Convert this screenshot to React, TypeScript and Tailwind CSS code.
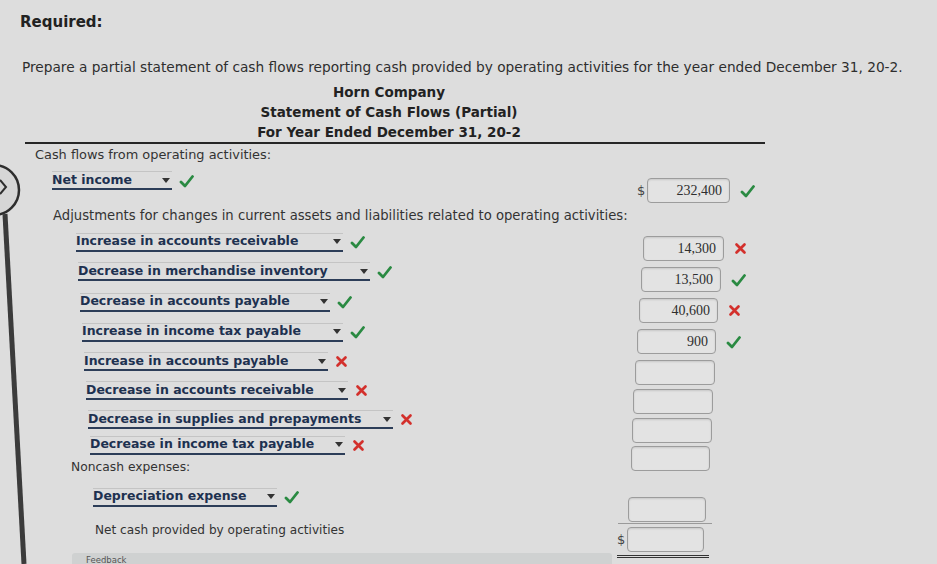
import React from "react";

type Mark = "ok" | "bad";

type Row =
  | { kind: "text"; text: string; cls: string; size: string }
  | { kind: "select"; text: string; cls: string; w: string; mark: Mark };

// left-hand rows; the indents drift right because the screen was photographed at an angle
const rows: Row[] = [
  { kind: "text", text: "Cash flows from operating activities:", cls: "h-[22px] pl-[35px]", size: "text-[12.9px]" },
  { kind: "select", text: "Net income", cls: "h-[29px] pl-[52px]", w: "w-[120px]", mark: "ok" },
  { kind: "text", text: "Adjustments for changes in current assets and liabilities related to operating activities:", cls: "h-[33px] pl-[53px] pt-[8px]", size: "text-[13.2px]" },
  { kind: "select", text: "Increase in accounts receivable", cls: "h-[28px] pl-[76px]", w: "w-[267px]", mark: "ok" },
  { kind: "select", text: "Decrease in merchandise inventory", cls: "h-[31px] pl-[78px]", w: "w-[292px]", mark: "ok" },
  { kind: "select", text: "Decrease in accounts payable", cls: "h-[30px] pl-[80px]", w: "w-[250px]", mark: "ok" },
  { kind: "select", text: "Increase in income tax payable", cls: "h-[30px] pl-[82px]", w: "w-[261px]", mark: "ok" },
  { kind: "select", text: "Increase in accounts payable", cls: "h-[29px] pl-[84px]", w: "w-[244px]", mark: "bad" },
  { kind: "select", text: "Decrease in accounts receivable", cls: "h-[29px] pl-[86px]", w: "w-[262px]", mark: "bad" },
  { kind: "select", text: "Decrease in supplies and prepayments", cls: "h-[29px] pl-[88px]", w: "w-[305px]", mark: "bad" },
  { kind: "select", text: "Decrease in income tax payable", cls: "h-[22px] pl-[90px]", w: "w-[255px]", mark: "bad" },
  { kind: "text", text: "Noncash expenses:", cls: "h-[23px] pl-[71px]", size: "text-[12.3px]" },
  { kind: "select", text: "Depreciation expense", cls: "h-[36px] pl-[93px]", w: "w-[184px]", mark: "ok" },
  { kind: "text", text: "Net cash provided by operating activities", cls: "h-[30px] pl-[95px]", size: "text-[12.1px]" },
];

type Box = { value?: string; dollar?: boolean; mark?: Mark; cls: string; w: string };

const boxes: Box[] = [
  { value: "232,400", dollar: true, mark: "ok", cls: "mt-[34px] pl-[37px]", w: "w-[83px]" },
  { value: "14,300", mark: "bad", cls: "mt-[33px] pl-[33px]", w: "w-[81px]" },
  { value: "13,500", mark: "ok", cls: "mt-[6px] pl-[31px]", w: "w-[80px]" },
  { value: "40,600", mark: "bad", cls: "mt-[6px] pl-[29px]", w: "w-[79px]" },
  { value: "900", mark: "ok", cls: "mt-[6px] pl-[27px]", w: "w-[79px]" },
  { cls: "mt-[6px] pl-[25px]", w: "w-[80px]" },
  { cls: "mt-[4px] pl-[23px]", w: "w-[80px]" },
  { cls: "mt-[4px] pl-[22px]", w: "w-[80px]" },
  { cls: "mt-[3px] pl-[21px]", w: "w-[79px]" },
  { cls: "mt-[26px] pl-[18px]", w: "w-[78px]" },
];

function Check() {
  return (
    <svg width="15" height="14" viewBox="0 0 15 14" className="shrink-0">
      <path d="M2 8 L6 12 L13.5 2.5" fill="none" stroke="#2a8a42" strokeWidth="2.8" strokeLinecap="round" strokeLinejoin="round" />
    </svg>
  );
}

function Cross() {
  return (
    <svg width="13" height="13" viewBox="0 0 13 13" className="shrink-0">
      <path d="M2.5 2.5 L10.5 10.5 M10.5 2.5 L2.5 10.5" stroke="#d3302c" strokeWidth="2.7" strokeLinecap="round" />
    </svg>
  );
}

function MarkIcon({ mark }: { mark: Mark }) {
  return mark === "ok" ? <Check /> : <Cross />;
}

function Select({ text, w }: { text: string; w: string }) {
  return (
    <div className={`${w} h-[19px] flex items-center justify-between border-t border-[#c4c4c4] border-b-2 border-b-[#2c3d58]`}>
      <span className="text-[12.5px] font-bold text-[#1d3150] leading-none whitespace-nowrap">{text}</span>
      <svg width="8" height="5" viewBox="0 0 8 5" className="mr-[2px] shrink-0">
        <path d="M0 0 H8 L4 5 Z" fill="#333" />
      </svg>
    </div>
  );
}

function AmountBox({ value, w }: { value?: string; w: string }) {
  return (
    <div
      className={`${w} h-[25px] rounded-[4px] border border-[#9c9c9c] bg-[#e3e3e3] shadow-[inset_0_1px_2px_rgba(0,0,0,0.12)] flex items-center justify-end pr-[7px] text-[14px] text-[#2e2e2e]`}
      style={{ fontFamily: '"Liberation Serif", serif' }}
    >
      {value}
    </div>
  );
}

export default function App() {
  return (
    <div
      className="relative w-[937px] h-[564px] overflow-hidden bg-[#dddddd] text-[#2b2b2b]"
      style={{ fontFamily: '"DejaVu Sans", Verdana, sans-serif' }}
    >
      {/* edge of the monitor / slide button on the left */}
      <svg className="absolute left-0 top-0" width="40" height="564" viewBox="0 0 40 564">
        <circle cx="-6" cy="190" r="25" fill="#d6d6d6" stroke="#2e2e2e" strokeWidth="2.5" />
        <path d="M0 180 L6 187 L0 194" fill="none" stroke="#2e2e2e" strokeWidth="2" />
        <path d="M5 214 L24 564" stroke="#3b3b3b" strokeWidth="5" />
      </svg>

      <div className="pt-[12px] pl-[20px] h-[32px] leading-[20px] text-[15px] font-bold text-[#222]">Required:</div>
      <div className="mt-[25px] pl-[22px] leading-[20px] text-[13.7px] text-[#2e2e2e] whitespace-nowrap">
        Prepare a partial statement of cash flows reporting cash provided by operating activities for the year ended December 31, 20-2.
      </div>

      <div className="mt-[5px] ml-[25px] w-[728px] text-center font-bold text-[13.5px] leading-[20px] text-[#222]">
        <div>Horn Company</div>
        <div>Statement of Cash Flows (Partial)</div>
        <div>For Year Ended December 31, 20-2</div>
      </div>
      <div className="ml-[25px] w-[740px] h-[2px] bg-[#262626]" />

      <div className="flex">
        <div className="w-[600px] flex flex-col">
          {rows.map((r) =>
            r.kind === "text" ? (
              <div key={r.text} className={`${r.cls} ${r.size} flex items-center whitespace-nowrap text-[#333]`}>
                {r.text}
              </div>
            ) : (
              <div key={r.text} className={`${r.cls} flex items-center gap-[7px]`}>
                <Select text={r.text} w={r.w} />
                <MarkIcon mark={r.mark} />
              </div>
            )
          )}
          <div className="mt-[8px] ml-[72px] w-[540px] h-[20px] rounded-t-[3px] bg-[#cfd1d1] pl-[14px] pt-[3px] leading-[9px] text-[8.5px] text-[#555]">
            Feedback
          </div>
        </div>

        <div className="flex-1 flex flex-col">
          {boxes.map((b, i) => (
            <div key={i} className={`${b.cls} flex items-center`}>
              <span className="w-[10px] text-[13px] text-[#444] leading-none">{b.dollar ? "$" : ""}</span>
              <AmountBox value={b.value} w={b.w} />
              {b.mark && (
                <span className="ml-[10px] flex items-center">
                  <MarkIcon mark={b.mark} />
                </span>
              )}
            </div>
          ))}
          <div className="mt-[1px] ml-[18px] w-[94px] h-px bg-[#9a9a9a]" />
          <div className="mt-[3px] pl-[17px] flex items-center">
            <span className="w-[10px] text-[13px] text-[#444] leading-none">$</span>
            <AmountBox w="w-[77px]" />
          </div>
          <div className="mt-[3px] ml-[17px] w-[92px] h-[3px] border-t border-b border-[#333]" />
        </div>
      </div>
    </div>
  );
}
